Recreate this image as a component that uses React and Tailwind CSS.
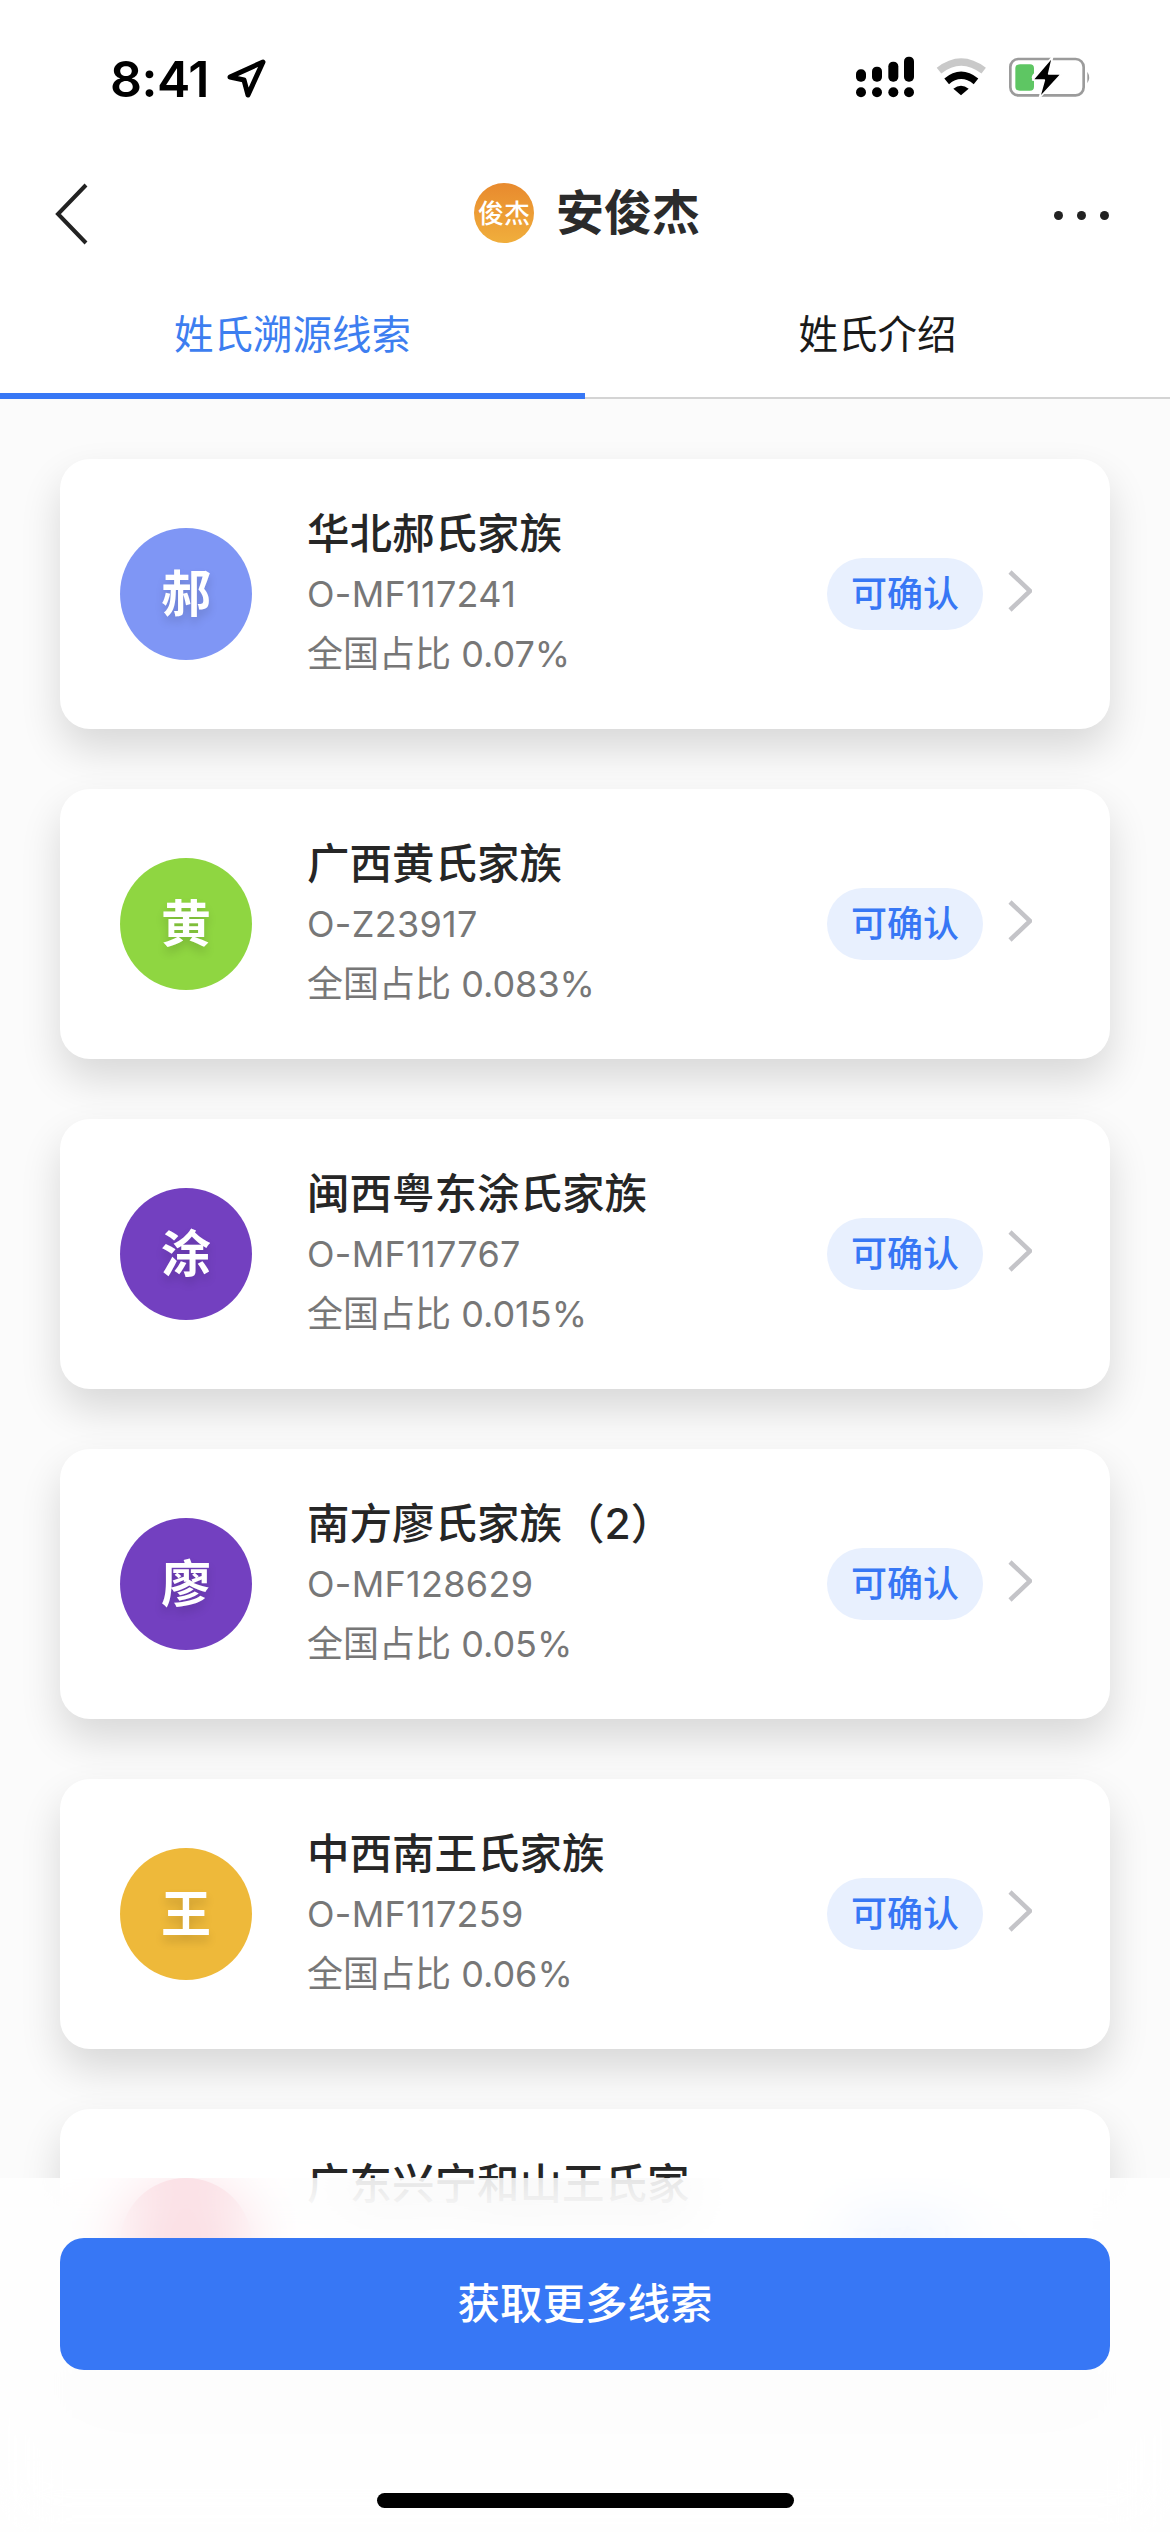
import React from 'react';

const clans = [
  { char: '郝', name: '华北郝氏家族', code: 'O-MF117241', share: '0.07%', color: 'bg-[#7f96f5]' },
  { char: '黄', name: '广西黄氏家族', code: 'O-Z23917', share: '0.083%', color: 'bg-[#8fd641]' },
  { char: '涂', name: '闽西粤东涂氏家族', code: 'O-MF117767', share: '0.015%', color: 'bg-[#7340c0]' },
  { char: '廖', name: '南方廖氏家族（2）', code: 'O-MF128629', share: '0.05%', color: 'bg-[#7340c0]' },
  { char: '王', name: '中西南王氏家族', code: 'O-MF117259', share: '0.06%', color: 'bg-[#eeb93a]' },
  { char: '', name: '广东兴宁和山王氏家', code: '', share: '', color: 'bg-[#e8607a]' },
];

function StatusIcons() {
  return (
    <svg width="300" height="80" viewBox="0 0 900 240" className="block">
      {/* signal */}
      <circle cx="93" cy="157" r="15" fill="#000" />
      <circle cx="141" cy="157" r="15" fill="#000" />
      <circle cx="190" cy="157" r="15" fill="#000" />
      <circle cx="237" cy="157" r="15" fill="#000" />
      <rect x="78" y="88" width="30" height="37" rx="14" fill="#000" />
      <rect x="126" y="80" width="30" height="45" rx="14" fill="#000" />
      <rect x="175" y="65" width="30" height="60" rx="14" fill="#000" />
      <rect x="222" y="50" width="30" height="75" rx="14" fill="#000" />
      {/* wifi */}
      <path d="M327 92 Q393 40 461 92" fill="none" stroke="#c9c9c9" strokeWidth="22" />
      <path d="M350 124 Q393 88 438 124" fill="none" stroke="#000" strokeWidth="22" />
      <path d="M393 166 L370 146 Q393 128 416 146 Z" fill="#000" />
      {/* battery */}
      <rect x="541" y="57" width="220" height="109" rx="24" fill="none" stroke="#9b9b9b" strokeWidth="8" />
      <path d="M772 95 Q783 112 772 130 Z" fill="#9b9b9b" />
      <path d="M570 73 H600 Q612 73 612 85 V100 Q598 112 612 124 V140 Q612 152 600 152 H570 Q556 152 556 140 V85 Q556 73 570 73 Z" fill="#5ec663" />
      <path d="M668 50 L608 120 H643 L628 174 L694 102 H656 Z" fill="#000" stroke="#fff" strokeWidth="5" strokeLinejoin="round" />
    </svg>
  );
}

function ClanCard({ clan }) {
  return (
    <div className="h-[270px] shrink-0 bg-white rounded-[30px] shadow-[0_20px_40px_rgba(0,0,0,0.14)] flex items-center pl-[60px] pr-[78px]">
      <div className={`w-[132px] h-[132px] rounded-full ${clan.color} flex items-center justify-center text-white text-[50px] font-bold [text-shadow:0_6px_10px_rgba(0,0,0,0.15)]`}>
        {clan.char}
      </div>
      <div className="ml-[55px] flex flex-col">
        <div className="text-[42.5px] leading-[60px] font-medium text-[#262626] whitespace-nowrap">{clan.name}</div>
        <div className="text-[36px] leading-[60px] min-h-[60px] tracking-[0.3px] text-[#777777]">{clan.code}</div>
        <div className="text-[36px] leading-[60px] text-[#777777] whitespace-nowrap">全国占比 {clan.share}</div>
      </div>
      <div className="ml-auto flex items-center gap-[25px]">
        <div className="w-[156px] h-[72px] rounded-full bg-[#e8f0fe] flex items-center justify-center text-[36px] font-medium text-[#3777f5]">
          可确认
        </div>
        <svg width="24" height="42" viewBox="0 0 24 42" className="block mb-[6px]">
          <path d="M2 2 L22 21 L2 40" fill="none" stroke="#c4c4c8" strokeWidth="4.5" />
        </svg>
      </div>
    </div>
  );
}

export default function App() {
  return (
    <div
      className="relative w-[1170px] h-[2532px] overflow-hidden bg-[#fbfbfb] flex flex-col"
      style={{ fontFamily: 'Inter, "Noto Sans CJK SC", sans-serif' }}
    >
      {/* Status bar */}
      <div className="h-[148px] shrink-0 bg-white flex items-start justify-between pl-[110px] pr-[40px]">
        <div className="flex items-center mt-[50px] h-[58px] gap-[18px]">
          <span className="text-[50px] font-semibold text-black leading-none tracking-[-0.5px]">8:41</span>
          <svg width="40" height="40" viewBox="0 0 40 40" className="block">
            <path d="M3 18 L36 3 L21 36 L17 21 Z" fill="none" stroke="#000" strokeWidth="5" strokeLinejoin="round" />
          </svg>
        </div>
        <div className="mt-[40px]">
          <StatusIcons />
        </div>
      </div>

      {/* Nav */}
      <div className="h-[130px] shrink-0 bg-white grid grid-cols-[1fr_auto_1fr] items-center px-[56px]">
        <svg width="36" height="62" viewBox="0 0 36 62" className="block -ml-[2px] mt-[2px]">
          <path d="M32 2 L4 31 L32 60" fill="none" stroke="#222" strokeWidth="4" />
        </svg>
        <div className="flex items-center gap-[22px] pl-[4px]">
          <div className="w-[60px] h-[60px] rounded-full bg-gradient-to-b from-[#e88a2e] to-[#f0ae3c] flex items-center justify-center text-white text-[26px] font-medium whitespace-nowrap">
            俊杰
          </div>
          <span className="text-[48px] font-bold text-[#2b2b2b] leading-none">安俊杰</span>
        </div>
        <div className="flex justify-end gap-[14px] mr-[5px] mt-[4px]">
          <span className="w-[9px] h-[9px] rounded-full bg-[#222]"></span>
          <span className="w-[9px] h-[9px] rounded-full bg-[#222]"></span>
          <span className="w-[9px] h-[9px] rounded-full bg-[#222]"></span>
        </div>
      </div>

      {/* Tabs */}
      <div className="h-[121px] shrink-0 bg-white flex border-b-2 border-[#d4d4d4]">
        <div className="flex-1 h-[121px] border-b-[6px] border-[#3777f5] flex items-center justify-center text-[39.5px] text-[#3d7ef0]">
          姓氏溯源线索
        </div>
        <div className="flex-1 h-[115px] flex items-center justify-center text-[39.5px] text-[#1a1a1a]">
          姓氏介绍
        </div>
      </div>

      {/* List */}
      <div className="flex flex-col gap-[60px] px-[60px] pt-[60px]">
        {clans.map((clan) => (
          <ClanCard key={clan.name} clan={clan} />
        ))}
      </div>

      {/* Bottom bar over the list */}
      <div className="absolute left-0 right-0 bottom-0 h-[354px] bg-white/80 backdrop-blur-[30px] px-[60px] pt-[60px]">
        <button className="w-full h-[132px] rounded-[24px] bg-[#3777f5] text-white text-[42.5px] font-medium">
          获取更多线索
        </button>
        <div className="absolute left-[377px] bottom-[24px] w-[417px] h-[15px] rounded-full bg-black"></div>
      </div>
    </div>
  );
}
